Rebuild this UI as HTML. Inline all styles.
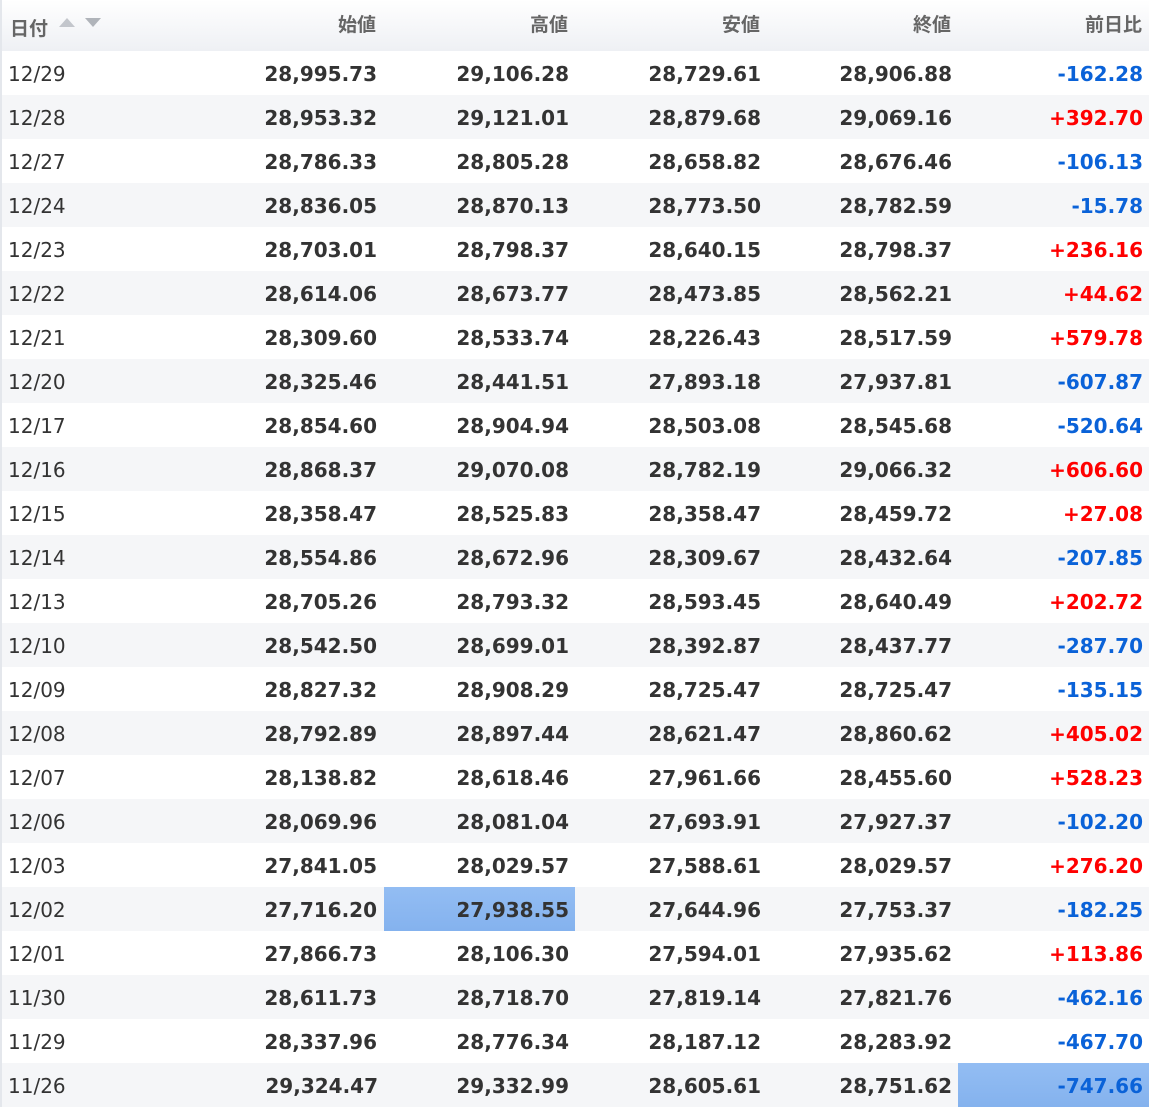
<!DOCTYPE html>
<html><head><meta charset="utf-8"><style>
html,body{margin:0;padding:0;background:#fff;}
body{width:1150px;height:1108px;overflow:hidden;}
table{border-collapse:collapse;width:1150px;table-layout:fixed;border-left:2px solid #e4e7ec;}
th{height:51px;box-sizing:border-box;padding:0 7px 0 0;text-align:right;font:bold 19px "Liberation Sans","Noto Sans CJK JP",sans-serif;color:#666;background:linear-gradient(#fff,#eef0f4);vertical-align:middle;line-height:20px;}
th.d{text-align:left;padding-left:8px;}
th.d span.t{position:relative;top:4px;}
td{height:44px;box-sizing:border-box;padding:2px 6px 0 0;text-align:right;font:bold 20px "DejaVu Sans",sans-serif;color:#333;white-space:nowrap;line-height:20px;}
td:first-child{text-align:left;font-weight:normal;padding-left:6px;}
tbody tr:nth-child(even) td{background:#f5f6f8;}
.r{color:#f00}.b{color:#0a62d8}
td.h{background:linear-gradient(#93bdf3,#84b2ee)!important;}
.tri{display:inline-block;width:0;height:0;border-left:8px solid transparent;border-right:8px solid transparent;margin-left:6px;vertical-align:4px;}
.up{border-bottom:9px solid #c3c6cc;}.dn{border-top:9px solid #b0b4ba;margin-left:10px;}
</style></head><body>
<table>
<colgroup><col style="width:192px"><col style="width:191px"><col style="width:191px"><col style="width:192px"><col style="width:191px"><col style="width:191px"></colgroup>
<thead><tr><th class="d"><span class="t">日付</span> <span class="tri up"></span><span class="tri dn"></span></th><th>始値</th><th>高値</th><th>安値</th><th>終値</th><th>前日比</th></tr></thead>
<tbody>
<tr><td>12/29</td><td>28,995.73</td><td>29,106.28</td><td>28,729.61</td><td>28,906.88</td><td class="b">-162.28</td></tr>
<tr><td>12/28</td><td>28,953.32</td><td>29,121.01</td><td>28,879.68</td><td>29,069.16</td><td class="r">+392.70</td></tr>
<tr><td>12/27</td><td>28,786.33</td><td>28,805.28</td><td>28,658.82</td><td>28,676.46</td><td class="b">-106.13</td></tr>
<tr><td>12/24</td><td>28,836.05</td><td>28,870.13</td><td>28,773.50</td><td>28,782.59</td><td class="b">-15.78</td></tr>
<tr><td>12/23</td><td>28,703.01</td><td>28,798.37</td><td>28,640.15</td><td>28,798.37</td><td class="r">+236.16</td></tr>
<tr><td>12/22</td><td>28,614.06</td><td>28,673.77</td><td>28,473.85</td><td>28,562.21</td><td class="r">+44.62</td></tr>
<tr><td>12/21</td><td>28,309.60</td><td>28,533.74</td><td>28,226.43</td><td>28,517.59</td><td class="r">+579.78</td></tr>
<tr><td>12/20</td><td>28,325.46</td><td>28,441.51</td><td>27,893.18</td><td>27,937.81</td><td class="b">-607.87</td></tr>
<tr><td>12/17</td><td>28,854.60</td><td>28,904.94</td><td>28,503.08</td><td>28,545.68</td><td class="b">-520.64</td></tr>
<tr><td>12/16</td><td>28,868.37</td><td>29,070.08</td><td>28,782.19</td><td>29,066.32</td><td class="r">+606.60</td></tr>
<tr><td>12/15</td><td>28,358.47</td><td>28,525.83</td><td>28,358.47</td><td>28,459.72</td><td class="r">+27.08</td></tr>
<tr><td>12/14</td><td>28,554.86</td><td>28,672.96</td><td>28,309.67</td><td>28,432.64</td><td class="b">-207.85</td></tr>
<tr><td>12/13</td><td>28,705.26</td><td>28,793.32</td><td>28,593.45</td><td>28,640.49</td><td class="r">+202.72</td></tr>
<tr><td>12/10</td><td>28,542.50</td><td>28,699.01</td><td>28,392.87</td><td>28,437.77</td><td class="b">-287.70</td></tr>
<tr><td>12/09</td><td>28,827.32</td><td>28,908.29</td><td>28,725.47</td><td>28,725.47</td><td class="b">-135.15</td></tr>
<tr><td>12/08</td><td>28,792.89</td><td>28,897.44</td><td>28,621.47</td><td>28,860.62</td><td class="r">+405.02</td></tr>
<tr><td>12/07</td><td>28,138.82</td><td>28,618.46</td><td>27,961.66</td><td>28,455.60</td><td class="r">+528.23</td></tr>
<tr><td>12/06</td><td>28,069.96</td><td>28,081.04</td><td>27,693.91</td><td>27,927.37</td><td class="b">-102.20</td></tr>
<tr><td>12/03</td><td>27,841.05</td><td>28,029.57</td><td>27,588.61</td><td>28,029.57</td><td class="r">+276.20</td></tr>
<tr><td>12/02</td><td>27,716.20</td><td class="h">27,938.55</td><td>27,644.96</td><td>27,753.37</td><td class="b">-182.25</td></tr>
<tr><td>12/01</td><td>27,866.73</td><td>28,106.30</td><td>27,594.01</td><td>27,935.62</td><td class="r">+113.86</td></tr>
<tr><td>11/30</td><td>28,611.73</td><td>28,718.70</td><td>27,819.14</td><td>27,821.76</td><td class="b">-462.16</td></tr>
<tr><td>11/29</td><td>28,337.96</td><td>28,776.34</td><td>28,187.12</td><td>28,283.92</td><td class="b">-467.70</td></tr>
<tr><td>11/26</td><td>29,324.47</td><td>29,332.99</td><td>28,605.61</td><td>28,751.62</td><td class="b h">-747.66</td></tr>
</tbody></table>
</body></html>
